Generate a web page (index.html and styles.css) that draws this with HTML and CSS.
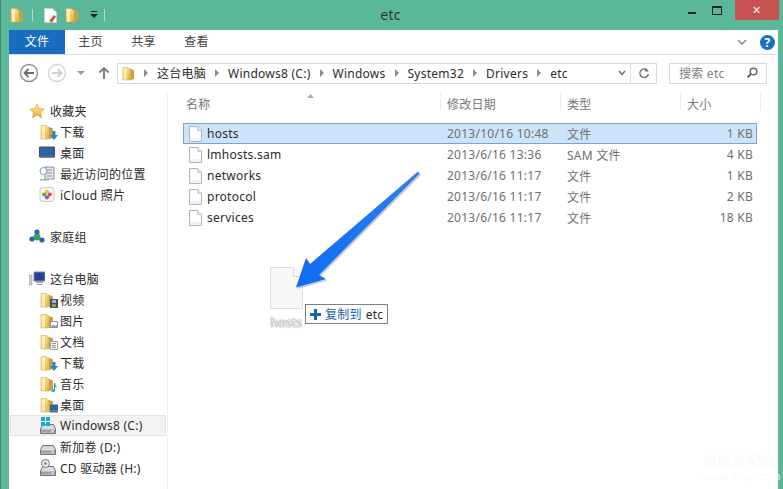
FILE: index.html
```html
<!DOCTYPE html>
<html lang="zh-CN">
<head>
  <meta charset="UTF-8">
  <title>etc</title>
  <link rel="stylesheet" href="styles.css">
</head>
<body>
  <!-- shared icons -->
  <svg class="sprites" width="0" height="0">
    <defs>
      <linearGradient id="fold" x1="0" y1="0" x2="1" y2="1">
        <stop offset="0" stop-color="#fdeea8"/>
        <stop offset="1" stop-color="#e0b445"/>
      </linearGradient>
      <linearGradient id="star" x1="0" y1="0" x2="0" y2="1">
        <stop offset="0" stop-color="#fff2a8"/>
        <stop offset="1" stop-color="#eda52b"/>
      </linearGradient>
      <linearGradient id="arrow" x1="1" y1="0" x2="0" y2="1">
        <stop offset="0" stop-color="#2f7fe8"/>
        <stop offset="1" stop-color="#0f6cf5"/>
      </linearGradient>
      <symbol id="folder" viewBox="0 0 14 16">
        <path d="M1 1.500h5.500l1 1.500H9v12H1z" fill="url(#fold)" stroke="#d6ad4e" stroke-width=".6"/>
        <path d="M9 3l4 1.500V14L9 15z" fill="#c9a043"/>
        <path d="M2 2.500h3v12H2z" fill="#fff6cf" opacity=".7"/>
      </symbol>
      <symbol id="doc" viewBox="0 0 14 17">
        <path d="M.5.500h9l4 4v12H.5z" fill="#fff" stroke="#a9a9a9"/>
        <path d="M9.500.5v4h4" fill="#eee" stroke="#b5b5b5"/>
        <path d="M1 13h12v3H1z" fill="#f1f1f1"/>
      </symbol>
      <symbol id="drive" viewBox="0 0 16 10">
        <path d="M2.500.5h11L15.500 5v4.500H.5V5z" fill="#d9dce0" stroke="#6f7378"/>
        <path d="M1 5.500h14v3H1z" fill="#9aa0a6"/>
        <path d="M11 6.500h3v1h-3z" fill="#e8f4ff"/>
      </symbol>
    </defs>
  </svg>

  <div class="window">
    <div class="titlebar">
      <div class="quick">
        <svg class="ic-folder"><use href="#folder"/></svg>
        <span class="quick-sep"></span>
        <svg class="ic-prop" viewBox="0 0 13 15">
          <path d="M.5.500h8l4 4v10H.5z" fill="#fff" stroke="#ccc"/>
          <path d="M5 13l5-6 2 1.500-4 6z" fill="#d9542b"/>
        </svg>
        <svg class="ic-folder"><use href="#folder"/></svg>
        <svg class="ic-drop" viewBox="0 0 8 8">
          <path d="M1 0h6v1H1z" fill="#222"/>
          <path d="M0 3h8L4 7z" fill="#222"/>
        </svg>
        <span class="quick-sep"></span>
      </div>
      <div class="title">etc</div>
      <div class="caption">
        <span class="cap-min"></span>
        <span class="cap-max"></span>
        <span class="cap-close">✕</span>
      </div>
    </div>

    <div class="frame">
      <div class="ribbon">
        <div class="rtab rtab-file">文件</div>
        <div class="rtab">主页</div>
        <div class="rtab">共享</div>
        <div class="rtab">查看</div>
        <div class="ribbon-right">
          <svg class="ic-chev" viewBox="0 0 10 6"><path d="M1 1l4 4 4-4" fill="none" stroke="#8a8a8a" stroke-width="1.500"/></svg>
          <span class="help">?</span>
        </div>
      </div>

      <div class="addrbar">
        <svg class="nav-btn" viewBox="0 0 20 20">
          <circle cx="10" cy="10" r="8.500" fill="#fff" stroke="#8f8f8f" stroke-width="1.400"/>
          <path d="M15 10H6M9.500 6l-4 4 4 4" fill="none" stroke="#6e6e6e" stroke-width="1.800"/>
        </svg>
        <svg class="nav-btn nav-fwd" viewBox="0 0 20 20">
          <circle cx="10" cy="10" r="8.500" fill="#fff" stroke="#d4d4d4" stroke-width="1.400"/>
          <path d="M5 10h9M10.500 6l4 4-4 4" fill="none" stroke="#cfcfcf" stroke-width="1.800"/>
        </svg>
        <svg class="nav-down" viewBox="0 0 8 5"><path d="M0 0h8L4 4z" fill="#9a9a9a"/></svg>
        <svg class="nav-up" viewBox="0 0 12 14"><path d="M6 13V2M1.500 6.500L6 2l4.500 4.500" fill="none" stroke="#777" stroke-width="1.800"/></svg>

        <div class="address">
          <svg class="ic-folder crumb-folder"><use href="#folder"/></svg>
          <span class="crumb-sep"></span><span class="crumb">这台电脑</span>
          <span class="crumb-sep"></span><span class="crumb">Windows8 (C:)</span>
          <span class="crumb-sep"></span><span class="crumb">Windows</span>
          <span class="crumb-sep"></span><span class="crumb">System32</span>
          <span class="crumb-sep"></span><span class="crumb">Drivers</span>
          <span class="crumb-sep"></span><span class="crumb">etc</span>
          <svg class="addr-chev" viewBox="0 0 8 6"><path d="M1 1l3 3.500L7 1" fill="none" stroke="#666" stroke-width="1.400"/></svg>
          <span class="addr-refresh">
            <svg viewBox="0 0 12 13" class="ic-refresh"><path d="M9.500 3.500A4.300 4.300 0 1 0 10.400 7" fill="none" stroke="#777" stroke-width="1.500"/><path d="M7 .5v4h4z" fill="#777"/></svg>
          </span>
        </div>

        <div class="search">
          <span>搜索 etc</span>
          <svg class="ic-search" viewBox="0 0 12 12"><circle cx="7.500" cy="4.500" r="3.300" fill="none" stroke="#666" stroke-width="1.500"/><path d="M5 7L1.500 10.500" stroke="#666" stroke-width="2"/></svg>
        </div>
      </div>

      <div class="body">
        <div class="nav">
          <div class="nav-row nav-head">
            <svg class="ic-nav" viewBox="0 0 16 16"><path d="M8 .8l2.200 4.800 5.100.5-3.800 3.400 1.100 5.200L8 12l-4.600 2.700 1.100-5.200L.7 6.100l5.100-.5z" fill="url(#star)" stroke="#d9962b" stroke-width=".6"/></svg>
            收藏夹
          </div>
          <div class="nav-row">
            <span class="ic-stack"><svg class="ic-folder"><use href="#folder"/></svg><svg class="ic-over" viewBox="0 0 8 9"><path d="M2.500 0h3v4H8L4 9 0 4h2.500z" fill="#2b83c9"/></svg></span>
            下载
          </div>
          <div class="nav-row">
            <svg class="ic-nav-wide" viewBox="0 0 16 12"><path d="M.5.500h15v10H.5z" fill="#2f62ad" stroke="#4a4f57"/><path d="M1 9h14v2H1z" fill="#5b6470"/></svg>
            桌面
          </div>
          <div class="nav-row">
            <svg class="ic-nav-wide" viewBox="0 0 16 15"><path d="M6 1h9v12H6z" fill="#e4e7ea" stroke="#8a9097"/><path d="M8 4h5M8 7h5M8 10h5" stroke="#8a9097"/><circle cx="4.500" cy="5" r="3.500" fill="#fff" stroke="#7e9ab3"/><path d="M1 13h9v1.500H1z" fill="#a9afb5"/></svg>
            最近访问的位置
          </div>
          <div class="nav-row">
            <svg class="ic-nav-wide" viewBox="0 0 16 16"><rect x=".5" y=".5" width="15" height="15" rx="3" fill="#f4f4f4" stroke="#c8c8c8"/><circle cx="8" cy="5" r="2.200" fill="#e9c22e"/><circle cx="11" cy="8" r="2.200" fill="#d94f4f"/><circle cx="8" cy="11" r="2.200" fill="#a24fc0"/><circle cx="5" cy="8" r="2.200" fill="#5fae3c"/></svg>
            iCloud 照片
          </div>
          <div class="nav-gap"></div>
          <div class="nav-row nav-head">
            <svg class="ic-nav" viewBox="0 0 16 16"><circle cx="8" cy="8" r="3.500" fill="#3fa34d"/><circle cx="8" cy="3" r="2.600" fill="#2c62b5"/><circle cx="3" cy="10" r="2.600" fill="#2c62b5"/><circle cx="13" cy="11" r="2.600" fill="#2c62b5"/></svg>
            家庭组
          </div>
          <div class="nav-gap"></div>
          <div class="nav-row nav-head">
            <svg class="ic-nav" viewBox="0 0 16 16"><path d="M5 1h11v9H5z" fill="#23409c" stroke="#7d8894"/><path d="M7 10h7v2H7zM8 13h5v1H8z" fill="#9aa3ad"/><path d="M0 4h3v10H0z" fill="#c6ccd2" stroke="#8a9097" stroke-width=".5"/></svg>
            这台电脑
          </div>
          <div class="nav-row">
            <span class="ic-stack"><svg class="ic-folder"><use href="#folder"/></svg><svg class="ic-over" viewBox="0 0 8 9"><path d="M0 0h8v9H0z" fill="#47525e"/><path d="M2 1h4v3H2z" fill="#8fb8d8"/><path d="M2 5h4v3H2z" fill="#7aa24f"/></svg></span>
            视频
          </div>
          <div class="nav-row">
            <span class="ic-stack"><svg class="ic-folder"><use href="#folder"/></svg><svg class="ic-over" viewBox="0 0 8 9"><path d="M.5 1.500h7v6h-7z" fill="#f4f6f8" stroke="#8c939a"/><path d="M1 7l2-2.500L5 6l2-1v2z" fill="#7f9fb8"/></svg></span>
            图片
          </div>
          <div class="nav-row">
            <span class="ic-stack"><svg class="ic-folder"><use href="#folder"/></svg><svg class="ic-over" viewBox="0 0 8 9"><path d="M.5.500h7v8h-7z" fill="#f7f7f7" stroke="#a0a6ac"/><path d="M2 2.500h4M2 4.500h4M2 6.500h4" stroke="#8c939a"/></svg></span>
            文档
          </div>
          <div class="nav-row">
            <span class="ic-stack"><svg class="ic-folder"><use href="#folder"/></svg><svg class="ic-over" viewBox="0 0 8 9"><path d="M2.500 0h3v4H8L4 9 0 4h2.500z" fill="#2b83c9"/></svg></span>
            下载
          </div>
          <div class="nav-row">
            <span class="ic-stack"><svg class="ic-folder"><use href="#folder"/></svg><svg class="ic-over" viewBox="0 0 8 12"><path d="M4 0h1.500c0 3 2.500 4 2 7C7 5.500 6 5 5.500 5v5c0 2-5 2.500-5 .5C.5 9 3 8.500 4 8.700z" fill="#2a96c9"/></svg></span>
            音乐
          </div>
          <div class="nav-row">
            <span class="ic-stack"><svg class="ic-folder"><use href="#folder"/></svg><svg class="ic-over" viewBox="0 0 8 8"><path d="M0 0h8v6H0z" fill="#2f62ad"/><path d="M0 6h8v2H0z" fill="#5b6470"/></svg></span>
            桌面
          </div>
          <div class="nav-row nav-current">
            <span class="ic-stack"><svg class="ic-drive"><use href="#drive"/></svg><svg class="ic-win" viewBox="0 0 9 9"><path d="M0 0h4v4H0zM5 0h4v4H5zM0 5h4v4H0zM5 5h4v4H5z" fill="#19a9d6"/></svg></span>
            Windows8 (C:)
          </div>
          <div class="nav-row">
            <span class="ic-stack"><svg class="ic-drive"><use href="#drive"/></svg></span>
            新加卷 (D:)
          </div>
          <div class="nav-row">
            <span class="ic-stack"><svg class="ic-drive"><use href="#drive"/></svg><svg class="ic-win" viewBox="0 0 9 9"><circle cx="4.500" cy="4.500" r="4" fill="#e8e8e8" stroke="#777"/><circle cx="4.500" cy="4.500" r="1.200" fill="#777"/></svg></span>
            CD 驱动器 (H:)
          </div>
        </div>

        <div class="files">
          <svg viewBox="0 0 7 4" class="ic-sort"><path d="M3.500 0L7 4H0z" fill="#9fb0ad"/></svg>
          <div class="cols">
            <div class="col col-name">名称</div>
            <div class="col col-date">修改日期</div>
            <div class="col col-type">类型</div>
            <div class="col col-size">大小</div>
          </div>

          <div class="list">
            <div class="row row-selected">
              <span class="cell-name"><svg class="ic-doc"><use href="#doc"/></svg>hosts</span>
              <span class="cell-date">2013/10/16 10:48</span>
              <span class="cell-type">文件</span>
              <span class="cell-size">1 KB</span>
            </div>
            <div class="row">
              <span class="cell-name"><svg class="ic-doc"><use href="#doc"/></svg>lmhosts.sam</span>
              <span class="cell-date">2013/6/16 13:36</span>
              <span class="cell-type">SAM 文件</span>
              <span class="cell-size">4 KB</span>
            </div>
            <div class="row">
              <span class="cell-name"><svg class="ic-doc"><use href="#doc"/></svg>networks</span>
              <span class="cell-date">2013/6/16 11:17</span>
              <span class="cell-type">文件</span>
              <span class="cell-size">1 KB</span>
            </div>
            <div class="row">
              <span class="cell-name"><svg class="ic-doc"><use href="#doc"/></svg>protocol</span>
              <span class="cell-date">2013/6/16 11:17</span>
              <span class="cell-type">文件</span>
              <span class="cell-size">2 KB</span>
            </div>
            <div class="row">
              <span class="cell-name"><svg class="ic-doc"><use href="#doc"/></svg>services</span>
              <span class="cell-date">2013/6/16 11:17</span>
              <span class="cell-type">文件</span>
              <span class="cell-size">18 KB</span>
            </div>
          </div>
        </div>
      </div>
    </div>

    <!-- drag ghost, tooltip and the annotation arrow sit over the file list -->
    <div class="ghost">
      <svg class="ghost-doc" viewBox="0 0 33 42">
        <path d="M.5.500h23l9 9v32H.5z" fill="#f7f7f7" stroke="#dcdcdc"/>
        <path d="M23.500.5v9h9" fill="#fbfbfb" stroke="#d8d8d8"/>
      </svg>
      <div class="ghost-label">hosts</div>
    </div>
    <div class="drag-tip">
      <svg class="ic-plus" viewBox="0 0 11 11"><path d="M4 0h3v4h4v3H7v4H4V7H0V4h4z" fill="#1565a8"/></svg>
      <span class="tip-verb">复制到</span>
      <span>etc</span>
    </div>
    <svg class="big-arrow" viewBox="0 0 134 124">
      <path d="M128 3.500l1.500 2L29 107l7 4-30 8.500L16 90l4 6z" fill="#5a6f8a" opacity=".35" transform="translate(1.500 1.500)"/>
      <path d="M128 3.500l1.500 2L29 107l7 4-30 8.500L16 90l4 6z" fill="url(#arrow)"/>
    </svg>
    <div class="watermark">
      <div>电脑装配网</div>
      <div class="watermark-url">www.dnzp.com</div>
    </div>
  </div>
</body>
</html>
```

FILE: styles.css
```css
html, body {
  margin: 0;
  padding: 0;
}
body {
  font-family: "Noto Sans", "Noto Sans CJK SC", sans-serif;
  font-size: 12px;
  letter-spacing: 0.25px;
  color: #2b2b2b;
}
svg {
  display: block;
  flex: none;
}
.sprites {
  position: absolute;
}
.window {
  position: relative;
  width: 783px;
  height: 489px;
  overflow: hidden;
  background-color: #5bb799;
  border-left: 1px solid #3f8a70;
  box-sizing: border-box;
  display: flex;
  flex-direction: column;
}

/* title bar */
.titlebar {
  height: 30px;
  flex: none;
  display: flex;
  align-items: flex-start;
  padding-right: 4px;
}
.quick {
  width: 110px;
  flex: none;
  height: 30px;
  padding-left: 9px;
  box-sizing: border-box;
  display: flex;
  align-items: center;
  gap: 8px;
}
.ic-folder {
  width: 14px;
  height: 16px;
}
.quick-sep {
  width: 1px;
  height: 12px;
  background-color: #b5dacb;
  margin-right: 3px;
}
.ic-prop {
  width: 13px;
  height: 15px;
}
.ic-drop {
  width: 8px;
  height: 8px;
  margin-left: 3px;
  margin-right: -2px;
}
.title {
  flex: 1;
  text-align: center;
  font-size: 14px;
  line-height: 30px;
  color: #333;
  padding-right: 18px;
}
.caption {
  display: flex;
  height: 20px;
}
.cap-min {
  width: 8px;
  height: 2px;
  background-color: #222;
  margin: 12px 16px 0 0;
}
.cap-max {
  width: 8px;
  height: 6px;
  border: 1px solid #222;
  border-top-width: 2px;
  margin: 6px 13px 0 0;
}
.cap-close {
  width: 44px;
  height: 20px;
  background-color: #c75050;
  color: #fff;
  font-size: 11px;
  line-height: 20px;
  text-align: center;
}

/* white frame */
.frame {
  flex: 1;
  margin: 0 5px 0 8px;
  background-color: #fff;
  display: flex;
  flex-direction: column;
  min-height: 0;
}
.ribbon {
  height: 24px;
  flex: none;
  display: flex;
  border-bottom: 1px solid #dadbdc;
}
.rtab {
  width: 53px;
  box-sizing: border-box;
  padding-right: 2px;
  text-align: center;
  line-height: 24px;
  color: #444;
}
.rtab-file {
  width: 56px;
  padding-right: 0;
  background-color: #1a6cc0;
  color: #fff;
}
.ribbon-right {
  margin-left: auto;
  display: flex;
  align-items: center;
  gap: 13px;
  padding-right: 3px;
}
.ic-chev {
  width: 10px;
  height: 6px;
}
.help {
  width: 15px;
  height: 15px;
  border-radius: 50%;
  background-color: #1b6fc2;
  color: #fff;
  font-weight: bold;
  font-size: 12px;
  line-height: 15px;
  text-align: center;
}

/* address row */
.addrbar {
  height: 37px;
  flex: none;
  display: flex;
  align-items: center;
  padding: 0 11px 1px 10px;
  box-sizing: border-box;
}
.nav-btn {
  width: 20px;
  height: 20px;
}
.nav-fwd {
  margin-left: 8px;
}
.nav-down {
  width: 8px;
  height: 5px;
  margin-left: 10px;
}
.nav-up {
  width: 12px;
  height: 14px;
  margin-left: 13px;
}
.address {
  width: 540px;
  height: 21px;
  margin-left: 7px;
  border: 1px solid #d9d9d9;
  box-sizing: border-box;
  display: flex;
  align-items: center;
  padding-left: 4px;
}
.crumb-folder {
  width: 13px;
  height: 15px;
  margin-right: 9px;
}
.crumb-sep {
  width: 0;
  height: 0;
  border-left: 4px solid #8a8a8a;
  border-top: 4px solid transparent;
  border-bottom: 4px solid transparent;
  margin-right: 9px;
}
.crumb {
  margin-right: 9px;
  white-space: nowrap;
}
.addr-chev {
  width: 8px;
  height: 6px;
  margin-left: auto;
  margin-right: 4px;
}
.addr-refresh {
  width: 25px;
  height: 19px;
  border-left: 1px solid #d9d9d9;
  display: flex;
  align-items: center;
  justify-content: center;
}
.ic-refresh {
  width: 12px;
  height: 13px;
}
.search {
  width: 98px;
  height: 21px;
  margin-left: 12px;
  border: 1px solid #d9d9d9;
  box-sizing: border-box;
  display: flex;
  align-items: center;
  justify-content: space-between;
  padding: 0 8px 0 9px;
  color: #808080;
}
.ic-search {
  width: 12px;
  height: 12px;
}

/* main area */
.body {
  flex: 1;
  display: flex;
  min-height: 0;
}
.nav {
  width: 159px;
  flex: none;
  box-sizing: border-box;
  padding-top: 8px;
  border-right: 1px solid #f0f0f0;
}
.nav-row {
  height: 21px;
  display: flex;
  align-items: center;
  gap: 4px;
  padding-left: 30px;
  margin-left: 1px;
  box-sizing: border-box;
  white-space: nowrap;
}
.nav-head {
  padding-left: 19px;
  gap: 5px;
}
.nav-gap {
  height: 21px;
}
.nav-current {
  background-color: #f2f2f2;
  border: 1px solid #e2e2e2;
  padding-left: 29px;
  margin-right: 1px;
}
.ic-nav {
  width: 16px;
  height: 16px;
}
.ic-nav-wide {
  width: 16px;
  height: 15px;
  margin-left: -1px;
  margin-right: 1px;
}
.ic-stack {
  position: relative;
  width: 16px;
  height: 16px;
  flex: none;
}
.ic-over {
  position: absolute;
  right: -2px;
  bottom: 0;
  width: 8px;
  height: 9px;
}
.ic-drive {
  position: absolute;
  left: 0;
  bottom: 0;
  width: 16px;
  height: 10px;
}
.ic-win {
  position: absolute;
  left: 1px;
  top: -1px;
  width: 9px;
  height: 9px;
}

/* file list */
.files {
  flex: 1;
  position: relative;
  min-width: 0;
  padding-left: 15px;
}
.ic-sort {
  position: absolute;
  left: 139px;
  top: 2px;
  width: 7px;
  height: 4px;
}
.cols {
  display: flex;
  height: 18px;
  color: #777;
}
.col {
  box-sizing: border-box;
  line-height: 26px;
  padding-left: 6px;
  border-right: 1px solid #ececec;
}
.col-name {
  width: 258px;
  padding-left: 3px;
}
.col-date {
  width: 120px;
}
.col-type {
  width: 120px;
}
.col-size {
  width: 80px;
}
.list {
  margin-top: 13px;
  width: 574px;
}
.row {
  height: 21px;
  display: flex;
  align-items: center;
  box-sizing: border-box;
  white-space: nowrap;
  color: #6f6f6f;
}
.row-selected {
  background-color: #cce4f9;
  border: 1px solid #7da2ce;
}
.cell-name {
  width: 264px;
  display: flex;
  align-items: center;
  gap: 5px;
  padding-left: 6px;
  box-sizing: border-box;
  color: #2b2b2b;
}
.row-selected .cell-name {
  width: 263px;
  padding-left: 5px;
}
.cell-date {
  width: 120px;
}
.cell-type {
  width: 120px;
}
.cell-size {
  width: 66px;
  text-align: right;
}
.ic-doc {
  width: 13px;
  height: 16px;
}

/* overlays */
.ghost {
  position: absolute;
  left: 269px;
  top: 267px;
  width: 33px;
}
.ghost-doc {
  width: 33px;
  height: 42px;
}
.ghost-label {
  text-align: center;
  font-size: 12px;
  line-height: 14px;
  margin-top: 7px;
  color: #eef1f3;
  text-shadow: 0 0 1px #6f7a83, 0 0 2px #8f98a0;
}
.drag-tip {
  position: absolute;
  left: 304px;
  top: 304px;
  width: 83px;
  height: 20px;
  box-sizing: border-box;
  border: 1px solid #7a8288;
  background-color: #fff;
  display: flex;
  align-items: center;
  gap: 4px;
  padding-left: 4px;
  white-space: nowrap;
}
.ic-plus {
  width: 11px;
  height: 11px;
}
.tip-verb {
  color: #1b62a8;
}
.big-arrow {
  position: absolute;
  left: 289px;
  top: 168px;
  width: 134px;
  height: 124px;
}
.watermark {
  position: absolute;
  left: 702px;
  top: 452px;
  color: #f9f9f9;
  font-size: 14px;
  line-height: 18px;
  letter-spacing: 0.5px;
}
.watermark-url {
  font-size: 10px;
  line-height: 12px;
}
```
